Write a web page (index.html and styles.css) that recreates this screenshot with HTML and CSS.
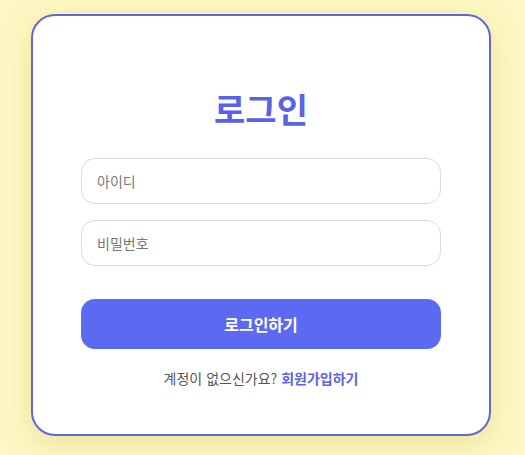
FILE: index.html
```html
<!DOCTYPE html>
<html lang="ko">
<head>
<meta charset="utf-8">
<link rel="stylesheet" href="styles.css">
</head>
<body>
<main class="page">
  <form class="card">
    <h1 class="title">로그인</h1>
    <input class="field" type="text" placeholder="아이디">
    <input class="field" type="password" placeholder="비밀번호">
    <button class="submit" type="button">로그인하기</button>
    <p class="signup">계정이 없으신가요? <a class="signup-link" href="#">회원가입하기</a></p>
  </form>
</main>
</body>
</html>
```
FILE: styles.css
```css
* { box-sizing: border-box; }
html, body { margin: 0; padding: 0; }
body {
  background: #fdf7c4;
  font-family: "Noto Sans CJK KR", "Noto Sans", sans-serif;
}
.page {
  min-height: 455px;
  display: flex;
  justify-content: center;
  align-items: flex-start;
  padding: 14px 3px 0 0;
}
.card {
  width: 460px;
  background: #ffffff;
  border: 2px solid #6366d9;
  border-radius: 24px;
  padding: 74px 48px 47px;
  display: flex;
  flex-direction: column;
  box-shadow: 0 8px 28px rgba(190, 170, 40, 0.25);
}
.title {
  margin: 0 0 30px;
  text-align: center;
  font-size: 34px;
  line-height: 38px;
  font-weight: 700;
  color: #5b63e4;
}
.field {
  height: 46px;
  border: 1px solid #dcdcdc;
  border-radius: 14px;
  padding: 0 15px;
  font-family: inherit;
  font-size: 14px;
  color: #333;
  outline: none;
  margin-bottom: 16px;
}
.field::placeholder { color: #777; }
.submit {
  margin-top: 17px;
  height: 50px;
  border: none;
  border-radius: 14px;
  background: #5c6af1;
  color: #ffffff;
  font-family: inherit;
  font-size: 16px;
  font-weight: 700;
}
.signup {
  margin: 20px 0 0;
  text-align: center;
  font-size: 14px;
  line-height: 18px;
  color: #555;
}
.signup-link {
  color: #5b63e4;
  font-weight: 700;
  text-decoration: none;
}
```
